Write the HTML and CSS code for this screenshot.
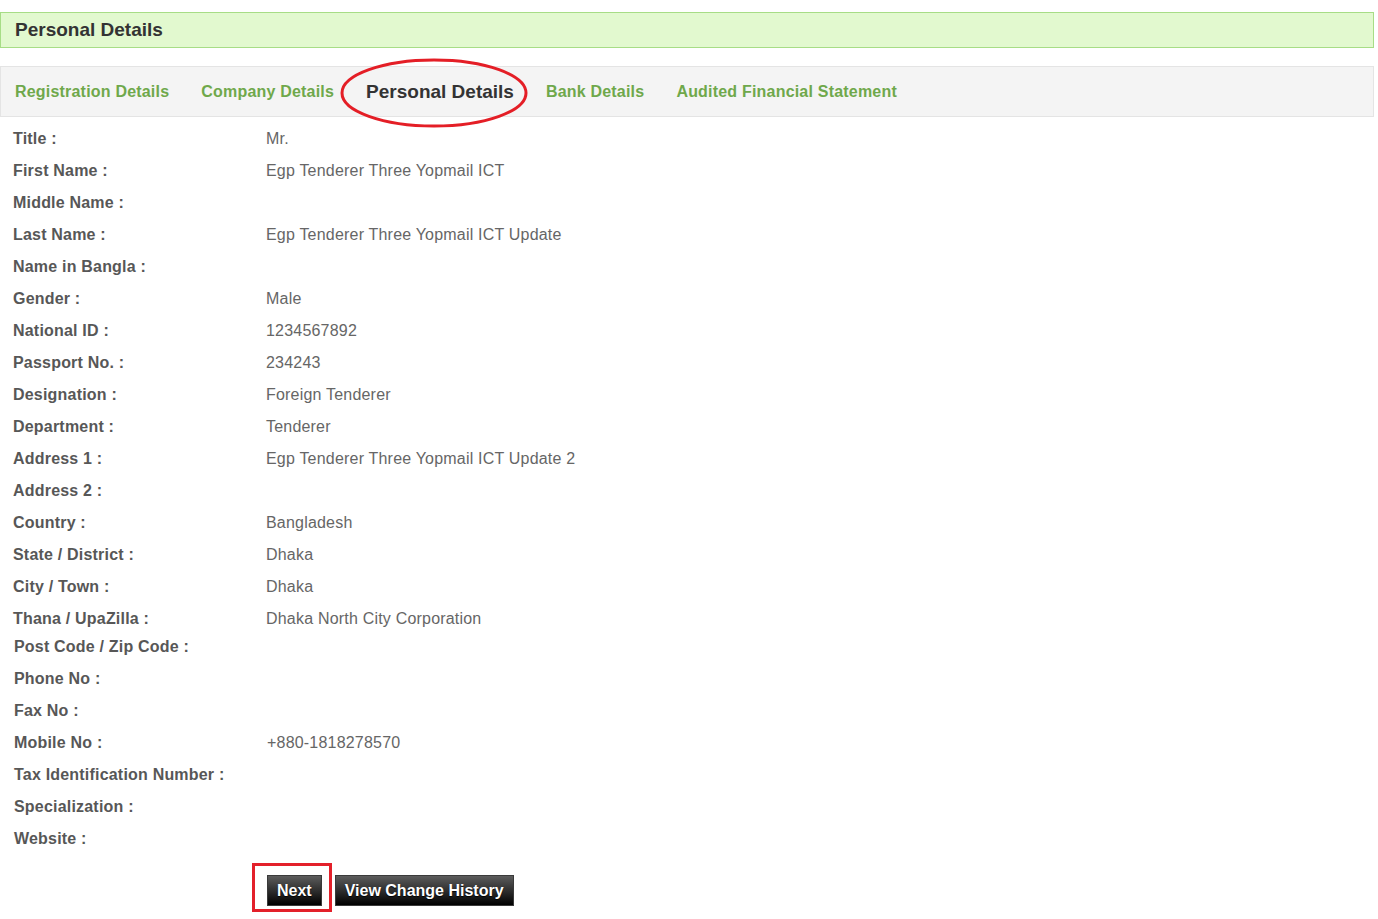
FILE: index.html
```html
<!DOCTYPE html>
<html>
	<head>
		<meta charset="UTF-8">
		<title>Personal Details</title>
		<link rel="stylesheet" href="styles.css">
	</head>
	<body>
		<div class="pageHead">Personal Details</div>

		<div class="tabs">
			<a href="##">Registration Details</a>
			<a href="##">Company Details</a>
			<span class="active">Personal Details
				<svg class="ring" width="190" height="72" viewBox="0 0 190 72">
					<ellipse cx="95" cy="36" rx="92" ry="33" fill="none" stroke="#e41e26" stroke-width="3" />
				</svg>
			</span>
			<a href="##">Bank Details</a>
			<a href="##">Audited Financial Statement</a>
		</div>

		<div class="info">
			<div class="row"><span class="lbl">Title :</span><span class="val">Mr.</span></div>
			<div class="row"><span class="lbl">First Name :</span><span class="val">Egp Tenderer Three Yopmail ICT</span></div>
			<div class="row"><span class="lbl">Middle Name :</span><span class="val"></span></div>
			<div class="row"><span class="lbl">Last Name :</span><span class="val">Egp Tenderer Three Yopmail ICT Update</span></div>
			<div class="row"><span class="lbl">Name in Bangla :</span><span class="val"></span></div>
			<div class="row"><span class="lbl">Gender :</span><span class="val">Male</span></div>
			<div class="row"><span class="lbl">National ID :</span><span class="val">1234567892</span></div>
			<div class="row"><span class="lbl">Passport No. :</span><span class="val">234243</span></div>
			<div class="row"><span class="lbl">Designation :</span><span class="val">Foreign Tenderer</span></div>
			<div class="row"><span class="lbl">Department :</span><span class="val">Tenderer</span></div>
			<div class="row"><span class="lbl">Address 1 :</span><span class="val">Egp Tenderer Three Yopmail ICT Update 2</span></div>
			<div class="row"><span class="lbl">Address 2 :</span><span class="val"></span></div>
			<div class="row"><span class="lbl">Country :</span><span class="val">Bangladesh</span></div>
			<div class="row"><span class="lbl">State / District :</span><span class="val">Dhaka</span></div>
			<div class="row"><span class="lbl">City / Town :</span><span class="val">Dhaka</span></div>
			<div class="row"><span class="lbl">Thana / UpaZilla :</span><span class="val">Dhaka North City Corporation</span></div>
		</div>

		<div class="info info2">
			<div class="row"><span class="lbl">Post Code / Zip Code :</span><span class="val"></span></div>
			<div class="row"><span class="lbl">Phone No :</span><span class="val"></span></div>
			<div class="row"><span class="lbl">Fax No :</span><span class="val"></span></div>
			<div class="row"><span class="lbl">Mobile No :</span><span class="val">+880-1818278570</span></div>
			<div class="row"><span class="lbl">Tax Identification Number :</span><span class="val"></span></div>
			<div class="row"><span class="lbl">Specialization :</span><span class="val"></span></div>
			<div class="row"><span class="lbl">Website :</span><span class="val"></span></div>
		</div>

		<div class="btnRow">
			<span class="nextWrap">
				<button class="btn">Next</button>
				<span class="box"></span>
			</span>
			<button class="btn">View Change History</button>
		</div>
	</body>
</html>
```

FILE: styles.css
```css
* {
	margin: 0;
	padding: 0;
	box-sizing: border-box;
}

body {
	font-family: "Liberation Sans", Arial, sans-serif;
	font-size: 16px;
	letter-spacing: 0.2px;
	color: #555;
	background: #fff;
	padding: 12px 0 20px;
	width: 1374px;
}

/* green title bar */
.pageHead {
	height: 36px;
	line-height: 34px;
	padding-left: 14px;
	background: #e2f9cf;
	border: 1px solid #a7dd86;
	font-size: 19px;
	font-weight: 700;
	letter-spacing: 0;
	color: #333;
}

/* tab strip */
.tabs {
	margin-top: 18px;
	height: 51px;
	display: flex;
	align-items: center;
	gap: 32px;
	padding-left: 14px;
	background: #f4f4f4;
	border: 1px solid #e4e4e4;
}

.tabs a {
	color: #6fa84b;
	font-weight: 700;
	text-decoration: none;
}

.tabs .active {
	position: relative;
	font-size: 19px;
	line-height: 22px;
	font-weight: 700;
	letter-spacing: 0;
	color: #333;
}

.tabs .ring {
	position: absolute;
	left: -27px;
	top: -24px;
}

/* label / value rows */
.info {
	margin-top: 6px;
	padding-left: 13px;
}

.info2 {
	margin-top: -4px;
	padding-left: 14px;
}

.row {
	display: grid;
	grid-template-columns: 253px 1fr;
	align-items: center;
	height: 32px;
}

.lbl {
	font-weight: 700;
	color: #575757;
}

.val {
	color: #666;
}

/* buttons */
.btnRow {
	margin-top: 20px;
	padding-left: 267px;
	display: flex;
	gap: 13px;
}

.nextWrap {
	position: relative;
	display: inline-block;
}

.btn {
	height: 31px;
	padding: 0 9px;
	font-family: "Liberation Sans", Arial, sans-serif;
	font-size: 16px;
	font-weight: 700;
	color: #fff;
	text-shadow: 0 1px 1px #000;
	background: linear-gradient(#5c5c5c, #2a2a2a 55%, #000);
	border: 1px solid #3a3a3a;
	cursor: pointer;
}

.nextWrap .box {
	position: absolute;
	left: -15px;
	top: -12px;
	width: 80px;
	height: 49px;
	border: 3px solid #e3202a;
}
```
